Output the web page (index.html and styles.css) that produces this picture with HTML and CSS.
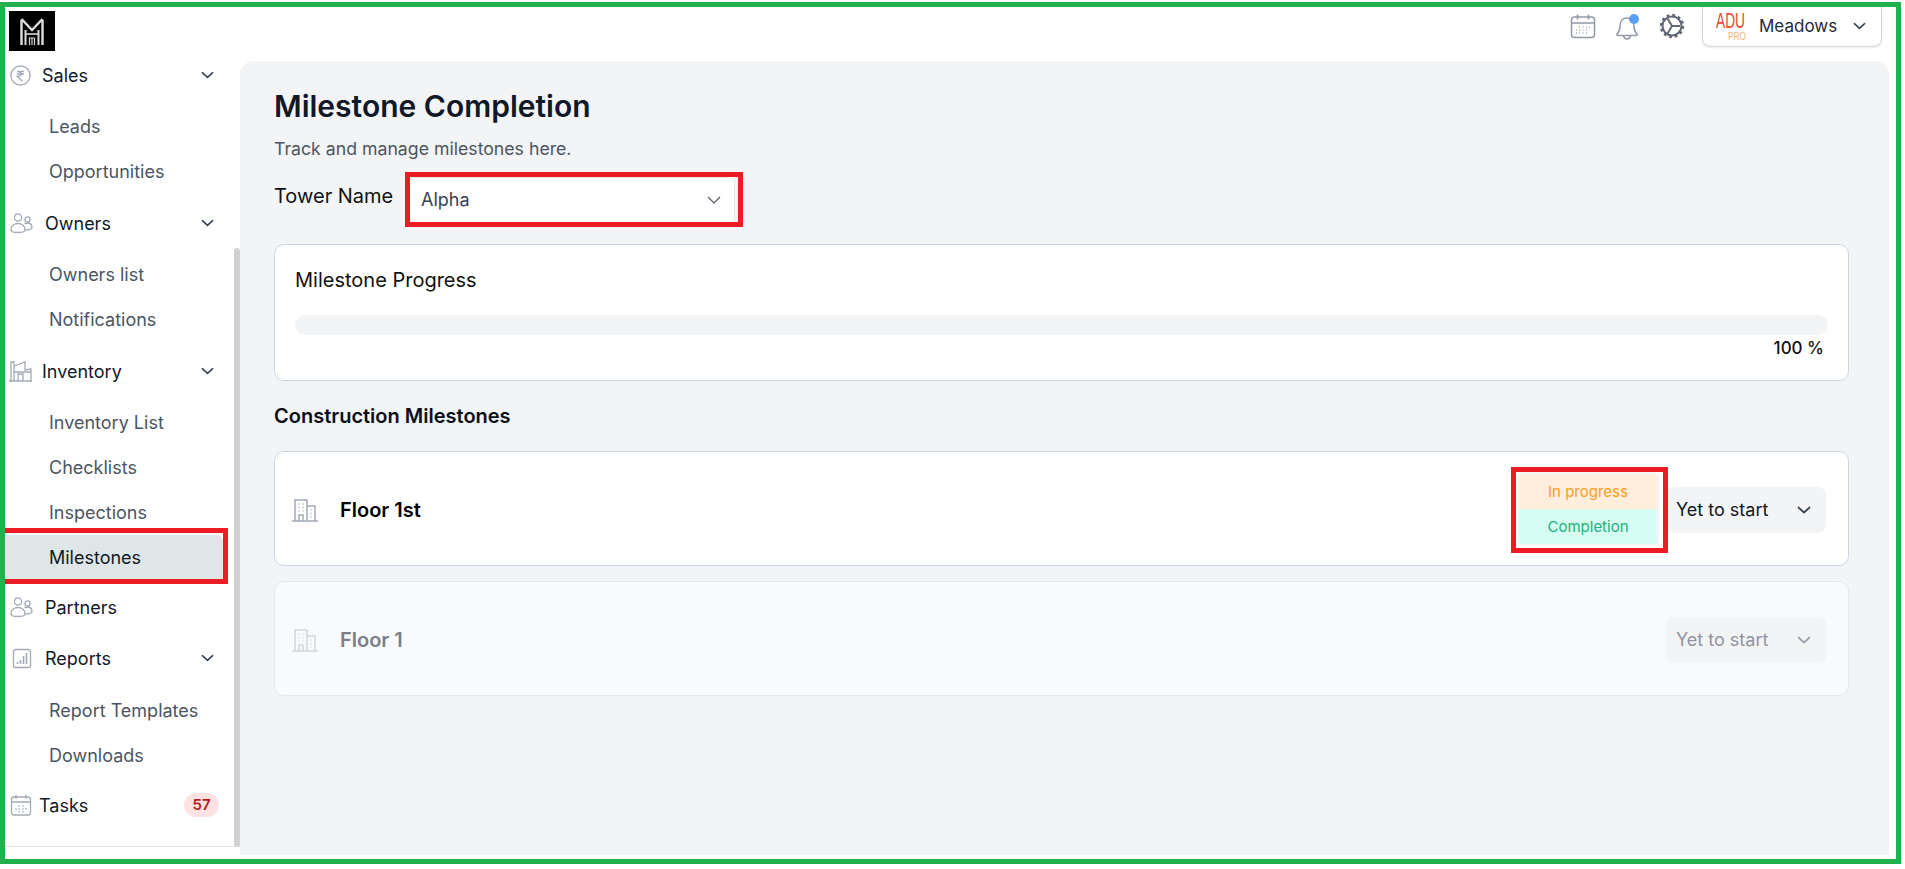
FILE: index.html
```html
<!DOCTYPE html>
<html lang="en">
<head>
<meta charset="utf-8">
<title>Milestone Completion</title>
<link rel="stylesheet" href="styles.css">
</head>
<body>
<svg class="sprites" width="0" height="0" aria-hidden="true">
  <symbol id="chev" viewBox="0 0 14 8"><path d="M1.5 1.5 7 6.5l5.5-5" fill="none" stroke="currentColor" stroke-width="1.7" stroke-linecap="round" stroke-linejoin="round"/></symbol>
  <symbol id="people" viewBox="0 0 23 21" fill="none" stroke="#a3a9b5" stroke-width="1.3">
    <circle cx="8" cy="4.5" r="3.6"/><circle cx="17.5" cy="6.5" r="2.6"/>
    <path d="M1 17c0-4 3-6.5 7-6.5s7 2.5 7 6.5c0 2-2 2.5-7 2.5s-7-.5-7-2.5z"/>
    <path d="M14.5 11c1-.7 2-1 3-1 2.800 0 4.500 2 4.500 4.500 0 2-1.500 2.500-6.500 2.500"/>
  </symbol>
  <symbol id="tower" viewBox="0 0 26 24" fill="none" stroke="currentColor" stroke-width="1.5">
    <path d="M0 23h26M3 23V2h12v21M15 8h8v15"/>
    <path d="M7 23v-6h4v6"/>
    <path d="M6.500 6h1M10.500 6h1M6.500 9.500h1M10.500 9.500h1M6.500 13h1M10.500 13h1M18.500 12h1M18.500 15.500h1M18.500 19h1" stroke-width="1.300"/>
  </symbol>
</svg>
<div class="frame">
  <header class="topbar">
    <div class="logo">
      <svg width="24" height="28" viewBox="0 0 24 28" fill="none" stroke="#d9d9d9">
        <path d="M1.500 28V3M22.500 28V3" stroke-width="2.500"/>
        <path d="M1.500 2 12 13 22.500 2" stroke-width="2.500"/>
        <path d="M5.500 28V13M18.500 28V13" stroke-width="2"/>
        <path d="M5.500 17h13" stroke-width="1.600"/>
        <path d="M9.500 28v-7h5M9.500 21v7M12 21v7M14.500 21v7" stroke-width="1.200"/>
      </svg>
    </div>
    <div class="top-actions">
      <svg class="top-icon" width="26" height="26" viewBox="0 0 26 26" fill="none" stroke="#9299a6" stroke-width="1.500">
        <rect x="1.500" y="4" width="23" height="20.500" rx="3"/>
        <path d="M1.500 10h23M7.500 1.500v5M18.500 1.500v5"/>
        <path d="M9 14h1M12.500 14h1M16 14h1M19 14h1M6 17h1M9 17h1M12.500 17h1M16 17h1M6 20h1M9 20h1M12.500 20h1M16 20h1" stroke="#7e8594" stroke-width="1.200"/>
      </svg>
      <svg class="top-icon" width="26" height="28" viewBox="0 0 26 28" fill="none" stroke="#9299a6" stroke-width="1.500">
        <path d="M3 21c2-2 3-3.500 3-8 0-5 3-8 7-8s7 3 7 8c0 4.500 1 6 3 8 .6.800 0 1.500-1 1.500H4c-1 0-1.600-.7-1-1.500z"/>
        <path d="M9.500 23c.5 2 2 3 3.500 3s3-1 3.500-3"/>
        <circle cx="20" cy="6" r="5" fill="#5b9dfa" stroke="none"/>
      </svg>
      <svg class="top-icon" width="26" height="26" viewBox="0 0 26 26" fill="none" stroke="#5f6775">
        <circle cx="13" cy="13" r="9.500" stroke-width="2"/>
        <circle cx="13" cy="13" r="11" stroke-width="2.400" stroke-dasharray="2.800 2.960"/>
        <path d="M13 13h8M13 13 8.500 5.500M13 13 8.500 20.500" stroke-width="2"/>
      </svg>
      <div class="account">
        <svg class="adu" width="50" height="36" viewBox="0 0 50 36">
          <text class="adu-main" x="3" y="20" textLength="29" lengthAdjust="spacingAndGlyphs">ADU</text>
          <text class="adu-sub" x="15" y="32" textLength="18" lengthAdjust="spacingAndGlyphs">PRO</text>
        </svg>
        <span class="account-name">Meadows</span>
        <svg class="chev-account" width="13" height="8"><use href="#chev"/></svg>
      </div>
    </div>
  </header>

  <div class="workspace">
    <aside class="sidebar">
      <div class="side-scroll">
        <nav class="nav">
          <div class="group">
            <div class="head head-a">
              <svg class="head-icon" width="21" height="21" viewBox="0 0 21 21" fill="none" stroke="#a3a9b5" stroke-width="1.300">
                <circle cx="10.500" cy="10.500" r="9.600"/>
                <path d="M7 6.500h7M7 9h7M8 6.500c4 0 4.500 5-.8 5l5 4.500"/>
              </svg>
              <span class="head-label">Sales</span>
              <svg class="chev" width="13" height="8"><use href="#chev"/></svg>
            </div>
            <div class="subs"><a class="sub">Leads</a><a class="sub">Opportunities</a></div>
          </div>
          <div class="group">
            <div class="head head-b">
              <svg class="head-icon" width="23" height="21"><use href="#people"/></svg>
              <span class="head-label">Owners</span>
              <svg class="chev" width="13" height="8"><use href="#chev"/></svg>
            </div>
            <div class="subs"><a class="sub">Owners list</a><a class="sub">Notifications</a></div>
          </div>
          <div class="group group-inventory">
            <div class="head head-d">
              <svg class="head-icon" width="23" height="22" viewBox="0 0 23 22" fill="none" stroke="#a3a9b5" stroke-width="1.300">
                <path d="M0 21h23M2 21V2h3v19M5 6l11-4v8l6-1v12M9 21v-7h5v7M5 12h17"/>
              </svg>
              <span class="head-label">Inventory</span>
              <svg class="chev" width="13" height="8"><use href="#chev"/></svg>
            </div>
            <div class="subs"><a class="sub">Inventory List</a><a class="sub">Checklists</a><a class="sub">Inspections</a><a class="sub sub-active">Milestones</a></div>
          </div>
          <div class="group group-single">
            <div class="head head-b">
              <svg class="head-icon" width="23" height="21"><use href="#people"/></svg>
              <span class="head-label">Partners</span>
            </div>
          </div>
          <div class="group group-reports">
            <div class="head head-b">
              <svg class="head-icon" width="23" height="21" viewBox="0 0 23 21" fill="none" stroke="#a3a9b5" stroke-width="1.300">
                <rect x="3.500" y="1.500" width="17" height="18" rx="2"/>
                <path d="M7.500 16v-2M10.500 16v-4M13.500 16V8M16.500 16V5" stroke-width="1.600"/>
              </svg>
              <span class="head-label">Reports</span>
              <svg class="chev" width="13" height="8"><use href="#chev"/></svg>
            </div>
            <div class="subs"><a class="sub">Report Templates</a><a class="sub">Downloads</a></div>
          </div>
          <div class="group">
            <div class="head head-c">
              <svg class="head-icon" width="22" height="22" viewBox="0 0 22 22" fill="none" stroke="#a3a9b5" stroke-width="1.300">
                <rect x="1.500" y="3" width="19" height="18" rx="2.500"/>
                <path d="M1.500 8h19M6 .8v4M16 .8v4"/>
                <path d="M8 12h2M12 12h2M5 15h2M8 15h2M12 15h2M15 15h2M8 18h2M12 18h2" stroke-width="1"/>
              </svg>
              <span class="head-label">Tasks</span>
              <span class="badge">57</span>
            </div>
          </div>
        </nav>
        <div class="thumb"></div>
      </div>
    </aside>

    <main class="main">
      <h1 class="title">Milestone Completion</h1>
      <p class="subtitle">Track and manage milestones here.</p>
      <div class="tower-row">
        <label class="tower-label">Tower Name</label>
        <div class="select">
          <span>Alpha</span>
          <svg class="chev-thin" width="14" height="8" viewBox="0 0 14 8"><path d="M1 1l6 6 6-6" fill="none" stroke="currentColor" stroke-width="1.100"/></svg>
        </div>
      </div>

      <section class="card progress-card">
        <h2 class="progress-title">Milestone Progress</h2>
        <div class="track"></div>
        <div class="pct">100 %</div>
      </section>

      <h2 class="section-title">Construction Milestones</h2>

      <section class="card floor">
        <svg class="floor-icon" width="26" height="24"><use href="#tower"/></svg>
        <span class="floor-name">Floor 1st</span>
        <div class="status">
          <div class="menu">
            <div class="menu-item menu-progress">In progress</div>
            <div class="menu-item menu-done">Completion</div>
          </div>
          <span>Yet to start</span>
          <svg class="chev-status" width="14" height="8"><use href="#chev"/></svg>
        </div>
      </section>

      <section class="card floor floor-off">
        <svg class="floor-icon" width="26" height="24"><use href="#tower"/></svg>
        <span class="floor-name">Floor 1</span>
        <div class="status">
          <span>Yet to start</span>
          <svg class="chev-status" width="14" height="8"><use href="#chev"/></svg>
        </div>
      </section>
    </main>
  </div>
</div>
</body>
</html>
```

FILE: styles.css
```css
* { box-sizing: border-box; }
html, body { margin: 0; padding: 0; background: #fff; }
body { font-family: Inter, "Liberation Sans", sans-serif; color: #111827; overflow: hidden; }
.sprites { position: absolute; }

.frame {
  width: 1901px;
  height: 862px;
  margin-top: 2px;
  border: 5px solid #22b14c;
  display: flex;
  flex-direction: column;
  overflow: hidden;
}

/* top bar */
.topbar { height: 54px; flex: none; display: flex; justify-content: space-between; align-items: flex-start; }
.logo { width: 46px; height: 40px; margin: 4px 0 0 4px; background: #000; display: flex; align-items: center; justify-content: center; }
.top-actions { display: flex; align-items: flex-start; margin-right: 14px; }
.top-icon { flex: none; margin-top: 6px; margin-right: 18.5px; }
.account {
  width: 180px; height: 40px; margin-left: -1px;
  border: 1px solid #d1d5db; border-top: 0;
  border-radius: 0 0 8px 8px;
  box-shadow: 0 1px 2px rgba(0,0,0,.08);
  display: flex; align-items: center; padding: 0 0 2px 10px;
}
.adu { flex: none; }
.adu-main { font: 400 22px "Liberation Sans", sans-serif; fill: #e8492f; }
.adu-sub { font: 400 11px "Liberation Sans", sans-serif; fill: #f2b27a; }
.account-name { margin-left: -4px; font-size: 17px; color: #1f2937; font-weight: 400; }
.chev-account { margin-left: 16px; color: #374151; }

/* layout */
.workspace { flex: 1; display: flex; min-height: 0; padding-right: 7px; }
.sidebar { width: 235px; flex: none; }
.side-scroll { display: flex; height: 786px; border-bottom: 1px solid #e5e7eb; }
.nav { flex: 1; min-width: 0; }
.thumb { width: 6px; height: 599px; margin-top: 187px; background: #d1d1d1; border-radius: 3px; flex: none; }

.group { margin-bottom: 15px; }
.group-inventory { margin-bottom: 14px; }
.group-single { margin-bottom: 23px; }
.group-reports { margin-bottom: 13px; }
.group-reports .subs { padding-top: 16px; }
.head { height: 28px; display: flex; align-items: center; font-size: 18px; font-weight: 400; color: #111827; padding-right: 20px; }
.head-icon { flex: none; margin-left: 5px; }
.head-label { flex: 1; }
.head-a .head-label { margin-left: 11px; }
.head-b .head-label { margin-left: 12px; }
.head-c .head-label { margin-left: 7px; }
.head-d .head-icon { margin-left: 4px; }
.head-d .head-label { margin-left: 10px; }
.chev { color: #374151; flex: none; }
.badge { width: 35px; height: 24px; margin-right: -5px; border-radius: 12px; background: #fee2e2; color: #b91c1c; font-size: 15px; font-weight: 600; text-align: center; line-height: 24px; }
.subs { padding-top: 15px; }
.sub { display: flex; align-items: center; height: 45px; width: 218px; padding-left: 44px; font-size: 18px; color: #4b5563; }
.sub-active {
  position: relative;
  height: 44px;
  background: #dfe6e8; color: #111827;
  border-radius: 0 6px 0 0;
}
.sub-active::after {
  content: "";
  position: absolute;
  top: -7px; right: -5px; bottom: -5px; left: 0;
  border: 5px solid #ed1c24; border-left: 0;
}

/* main */
.main {
  flex: 1; min-width: 0; height: 794px;
  background: #f3f4f6;
  border-radius: 14px 14px 0 0;
  padding: 27px 40px 0 34px;
}
.title { margin: 0; font-size: 30px; line-height: 36px; font-weight: 600; color: #111827; }
.subtitle { margin: 13px 0 0; font-size: 17.7px; line-height: 24px; color: #4b5563; }
.tower-row { display: flex; align-items: flex-start; margin-top: 16px; }
.tower-label { width: 135px; font-size: 20px; line-height: 28px; margin-top: 5px; color: #111; }
.select {
  position: relative;
  width: 326px; height: 46px;
  background: #fff; border: 1px solid #e5e7eb; border-radius: 6px;
  display: flex; align-items: center; justify-content: space-between;
  padding: 0 13px 2px 11px;
  font-size: 18px; color: #374151;
}
.select::after {
  content: "";
  position: absolute;
  top: -6px; right: -9px; bottom: -5px; left: -5px;
  border: 5px solid #ed1c24;
}
.chev-thin { color: #4b5563; margin-top: 2px; }

.card { background: #fff; border: 1px solid #cbd5e1; border-radius: 10px; }
.progress-card { margin-top: 21px; height: 137px; padding: 21px 20px 0; }
.progress-title { margin: 0; font-size: 20px; line-height: 28px; font-weight: 400; color: #111; }
.track { margin-top: 21px; height: 20px; border-radius: 10px; background: #f3f4f6; }
.pct { margin: 1px 4px 0 0; text-align: right; font-size: 17px; line-height: 24px; font-weight: 500; color: #111; }
.section-title { margin: 21px 0 0; padding-top: 1px; font-size: 20px; line-height: 27px; font-weight: 600; color: #0b0f19; }

.floor { margin-top: 15px; height: 115px; display: flex; align-items: center; padding: 2px 22px 0 17px; color: #a3a9b5; }
.section-title + .floor { margin-top: 21px; }
.floor-name { flex: 1; margin-left: 22px; font-size: 20px; font-weight: 600; color: #000; }
.status {
  position: relative;
  width: 160px; height: 46px;
  background: #f3f4f6; border-radius: 8px;
  display: flex; align-items: center; justify-content: space-between;
  padding: 0 15px 0 10px;
  font-size: 18px; color: #111827;
}
.chev-status { color: #374151; }
.floor-off { background: #f9fafb; border-color: #e5e7eb; color: #d1d5db; }
.floor-off .floor-name { color: #7b8088; }
.floor-off .status { color: #8f95a1; }
.floor-off .chev-status { color: #9ca3af; }

.menu {
  position: absolute;
  top: -13px; right: calc(100% + 9px);
  width: 138px;
  box-shadow: 0 0 4px rgba(0,0,0,.12);
  z-index: 2;
}
.menu::after {
  content: "";
  position: absolute;
  top: -7px; right: -11px; bottom: -9px; left: -8px;
  border: 5px solid #ed1c24;
}
.menu-item { height: 35px; display: flex; align-items: center; justify-content: center; font-size: 15px; }
.menu-progress { background: #ffeedb; color: #f99e1f; }
.menu-done { background: #d6fdf1; color: #22b07d; }
```
